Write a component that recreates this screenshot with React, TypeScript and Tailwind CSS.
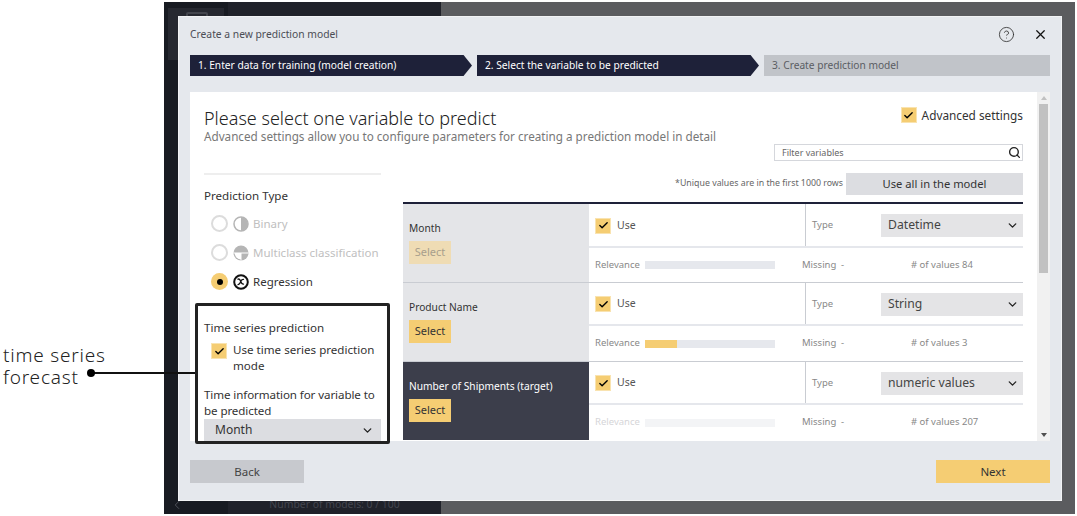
import React from 'react';
import { Check, ChevronDown, ChevronLeft, Search, X, CircleHelp } from 'lucide-react';

const font = "font-['Noto_Sans','Open_Sans',sans-serif]";

const CheckBox = ({ size = 'w-[16px] h-[16px]' }: { size?: string }) => (
  <span className={`${size} shrink-0 bg-[#f5cd73] border border-[#f9e3b0] flex items-center justify-center`}>
    <Check size={11} strokeWidth={3} className="text-black" />
  </span>
);

const BinaryIcon = () => (
  <svg width="16" height="16" viewBox="0 0 16 16" className="shrink-0">
    <circle cx="8" cy="8" r="7" fill="none" stroke="#b5b5b5" strokeWidth="1.5" />
    <path d="M8 1a7 7 0 0 1 0 14z" fill="#b5b5b5" />
  </svg>
);

const MultiIcon = () => (
  <svg width="16" height="16" viewBox="0 0 16 16" className="shrink-0">
    <circle cx="8" cy="8" r="7.5" fill="#b5b5b5" />
    <path d="M8 8v6.3A6.3 6.3 0 0 1 1.7 8z" fill="#fff" />
    <path d="M.5 8h15M8 8v7.5" stroke="#fff" strokeWidth="1" fill="none" />
  </svg>
);

const RegressionIcon = () => (
  <svg width="16" height="16" viewBox="0 0 16 16" className="shrink-0">
    <circle cx="8" cy="8" r="6.8" fill="none" stroke="#111" strokeWidth="2" />
    <path d="M4.5 5.500c1.200-1 2.200-.6 3 1.500s1.800 3.500 3.500 3M11 5.500c-1.500-.5-3 1-3.500 2.500S5.500 11 4.500 10.500" fill="none" stroke="#111" strokeWidth="1.300" />
  </svg>
);

const Radio = ({ on }: { on?: boolean }) =>
  on ? (
    <span className="w-[17px] h-[17px] rounded-full bg-[#f5cd73] flex items-center justify-center shrink-0">
      <span className="w-[6px] h-[6px] rounded-full bg-black" />
    </span>
  ) : (
    <span className="w-[17px] h-[17px] rounded-full bg-white border-2 border-[#dcdcdc] shrink-0" />
  );

const predictionTypes = [
  { label: 'Binary', icon: <BinaryIcon />, on: false },
  { label: 'Multiclass classification', icon: <MultiIcon />, on: false },
  { label: 'Regression', icon: <RegressionIcon />, on: true },
];

const rows = [
  { name: 'Month', type: 'Datetime', count: '84', selectDim: true, dark: false, fill: 'w-0', dimRelevance: false },
  { name: 'Product Name', type: 'String', count: '3', selectDim: false, dark: false, fill: 'w-[32px]', dimRelevance: false },
  { name: 'Number of Shipments (target)', type: 'numeric values', count: '207', selectDim: false, dark: true, fill: 'w-0', dimRelevance: true },
];

export default function App() {
  return (
    <div className={`relative w-[1077px] h-[516px] overflow-hidden bg-white pl-[164px] pr-[2px] py-[2px] ${font}`}>
      {/* page behind the dialog */}
      <div className="flex h-full">
        <div className="w-[64px] bg-[#181b22] flex flex-col justify-between pt-[6px] pl-[4px] pb-[2px]">
          <div className="w-[56px] h-[52px] bg-[#262830] pt-[4px] pl-[18px]">
            <div className="w-[22px] h-[12px] border-2 border-[#43454d] rounded-[2px]" />
          </div>
          <ChevronLeft size={14} strokeWidth={1.5} className="text-[#55575f] ml-[2px]" />
        </div>
        <div className="w-[213px] bg-[#20222a] flex flex-col justify-end items-center pb-[3px]">
          <span className="text-[10.4px] leading-[14px] text-[#44464f]">Number of models: 0 / 100</span>
        </div>
        <div className="flex-1 bg-[#5b5c5f]" />
      </div>

      {/* dialog */}
      <div className="absolute left-[178px] top-[16px] w-[884px] h-[485px] bg-[#e5e8ed] border border-[#f2f3f5] px-[11px] flex flex-col">
        <div className="h-[38px] flex items-center justify-between pr-[2px] pb-[3px]">
          <span className="text-[10.3px] text-[#4b4d55]">Create a new prediction model</span>
          <div className="flex items-center gap-[18px]">
            <CircleHelp size={17} strokeWidth={1.2} className="text-[#333]" />
            <X size={15} strokeWidth={2} className="text-[#111]" />
          </div>
        </div>

        <div className="flex h-[21px] gap-[5px] text-[10.2px]">
          <div className="w-[282px] pl-[8px] flex items-center bg-[#1e2139] text-white [clip-path:polygon(0_0,97%_0,100%_50%,97%_100%,0_100%)]">
            1. Enter data for training (model creation)
          </div>
          <div className="w-[282px] pl-[8px] flex items-center bg-[#1e2139] text-white [clip-path:polygon(0_0,97%_0,100%_50%,97%_100%,0_100%)]">
            2. Select the variable to be predicted
          </div>
          <div className="flex-1 pl-[8px] flex items-center bg-[#c1c4c9] text-[#5a5d63]">3. Create prediction model</div>
        </div>

        {/* white content */}
        <div className="mt-[16px] h-[349px] bg-white flex overflow-hidden">
          <div className="flex-1 pl-[14px] pr-[14px] min-w-0">
            <div className="h-[52px] pt-[16px] flex justify-between relative">
              <div>
                <h1 className="text-[18px] leading-[21px] font-light text-[#222]">Please select one variable to predict</h1>
                <p className="text-[11.7px] leading-[15px] text-[#777]">Advanced settings allow you to configure parameters for creating a prediction model in detail</p>
              </div>
              <div className="flex items-start gap-[5px] -mt-[1px]">
                <CheckBox />
                <span className="text-[11.8px] leading-[16px] text-[#333] whitespace-nowrap">Advanced settings</span>
              </div>
            </div>

            <div className="flex gap-[22px]">
              {/* left column */}
              <div className="w-[177px] shrink-0 pt-[29px]">
                <div className="h-[2px] bg-[#eeeeee]" />
                <div className="mt-[13px] text-[11.6px] leading-[16px] text-[#333]">Prediction Type</div>
                <div className="mt-[5px] pl-[7px]">
                  {predictionTypes.map(p => (
                    <div key={p.label} className="h-[29px] flex items-center">
                      <Radio on={p.on} />
                      <span className="ml-[5px]">{p.icon}</span>
                      <span className={`ml-[4px] text-[11.5px] whitespace-nowrap ${p.on ? 'text-[#333]' : 'text-[#c0c0c0]'}`}>{p.label}</span>
                    </div>
                  ))}
                </div>
                <div className="mt-[24px] text-[11.6px] leading-[16px] text-[#333]">Time series prediction</div>
                <div className="mt-[6px] pl-[7px] flex gap-[6px] items-start">
                  <span className="mt-[1px]"><CheckBox /></span>
                  <span className="text-[11.6px] leading-[16px] text-[#333]">Use time series prediction mode</span>
                </div>
                <div className="mt-[13px] text-[11.6px] leading-[16px] tracking-[-0.1px] text-[#333]">Time information for variable to be predicted</div>
                <div className="h-[23px] pb-[1px] bg-[#dcdde1] flex items-center justify-between pl-[11px] pr-[7px] text-[12px] text-[#333]">
                  Month
                  <ChevronDown size={13} strokeWidth={2.5} className="text-[#222]" />
                </div>
              </div>

              {/* right column */}
              <div className="flex-1 min-w-0">
                <div className="ml-auto w-[249px] h-[17px] border border-[#d5d7dc] flex items-center justify-between pl-[7px] pr-[1px]">
                  <span className="text-[9px] text-[#666]">Filter variables</span>
                  <Search size={13} strokeWidth={2.5} className="text-[#222]" />
                </div>
                <div className="mt-[12px] h-[22px] flex justify-end items-center gap-[3px]">
                  <span className="text-[8.8px] text-[#666]">*Unique values are in the first 1000 rows</span>
                  <div className="w-[177px] h-[22px] bg-[#dcdde1] flex items-center justify-center text-[11.2px] text-[#333]">Use all in the model</div>
                </div>
                <div className="mt-[7px] border-t-2 border-[#1e2139]">
                  {rows.map((r, i) => (
                    <div key={r.name} className={`grid grid-cols-[186px_1fr] ${i > 0 ? 'h-[79px] border-t border-[#c9ccd2]' : 'h-[78px]'}`}>
                      <div className={`pl-[6px] pt-[17px] ${r.dark ? 'bg-[#3c3e4b] text-white' : 'bg-[#e4e5e8] text-[#333]'}`}>
                        <div className="text-[10.2px] leading-[14px] whitespace-nowrap">{r.name}</div>
                        <button className={`mt-[6px] block w-[42px] h-[23px] text-[11px] ${r.selectDim ? 'bg-[#efdcb4] text-[#a89f8c]' : 'bg-[#f5cd73] text-[#333]'}`}>
                          Select
                        </button>
                      </div>
                      <div className="flex flex-col min-w-0">
                        <div className={`flex border-b-2 border-[#e5e7ec] ${i === 0 ? 'h-[44px]' : 'h-[43px]'}`}>
                          <div className="w-[217px] border-r border-[#c9ccd2] flex items-center pl-[6px] pt-[1px] gap-[6px]">
                            <CheckBox />
                            <span className="text-[10.5px] text-[#555]">Use</span>
                          </div>
                          <div className="flex-1 flex items-center pl-[6px] pt-[1px]">
                            <span className="w-[69px] text-[9.5px] text-[#888]">Type</span>
                            <div className="flex-1 h-[23px] bg-[#e4e4e6] flex items-center justify-between pl-[7px] pr-[4px] text-[12.2px] text-[#444]">
                              {r.type}
                              <ChevronDown size={13} strokeWidth={2.5} className="text-[#222]" />
                            </div>
                          </div>
                        </div>
                        <div className="flex-1 flex items-center pl-[6px] text-[9.5px] text-[#888] whitespace-nowrap">
                          <span className={`w-[50px] ${r.dimRelevance ? 'text-[#d5d5d8]' : ''}`}>Relevance</span>
                          <div className={`w-[130px] h-[8px] ${r.dimRelevance ? 'bg-[#f3f4f6]' : 'bg-[#e6e8ed]'}`}>
                            <div className={`h-full bg-[#f5cd73] ${r.fill}`} />
                          </div>
                          <span className="ml-[27px] w-[39px]">Missing</span>
                          <span className="w-[70px]">-</span>
                          <span className="w-[51px]"># of values</span>
                          <span>{r.count}</span>
                        </div>
                      </div>
                    </div>
                  ))}
                </div>
              </div>
            </div>
          </div>

          {/* scrollbar */}
          <div className="w-[13px] shrink-0 bg-[#f1f1f1] flex flex-col items-center">
            <div className="h-[12px] flex items-center">
              <span className="w-0 h-0 border-x-[3px] border-x-transparent border-b-[4px] border-b-[#c1c1c1]" />
            </div>
            <div className="w-[9px] h-[169px] bg-[#c1c1c1]" />
            <div className="mt-auto h-[12px] flex items-center">
              <span className="w-0 h-0 border-x-[3px] border-x-transparent border-t-[4px] border-t-[#505050]" />
            </div>
          </div>
        </div>

        <div className="mt-[19px] flex justify-between">
          <button className="w-[114px] h-[23px] bg-[#c7c9ce] text-[11.5px] text-[#444]">Back</button>
          <button className="w-[114px] h-[23px] bg-[#f5cd73] text-[11.5px] text-[#333]">Next</button>
        </div>
      </div>

      {/* callout over the picture */}
      <div className="absolute left-[195px] top-[303px] w-[195px] h-[141px] border-[3px] border-[#222] rounded-[2px]" />
      <div className="absolute left-[91px] top-[372px] w-[104px] h-[2px] bg-[#111]" />
      <div className="absolute left-[87px] top-[369px] w-[8px] h-[8px] rounded-full bg-black" />
      <div className="absolute left-[3px] top-[344px] text-[19px] leading-[22px] tracking-[0.8px] text-[#222] font-light">
        time series
        <br />
        forecast
      </div>
    </div>
  );
}
